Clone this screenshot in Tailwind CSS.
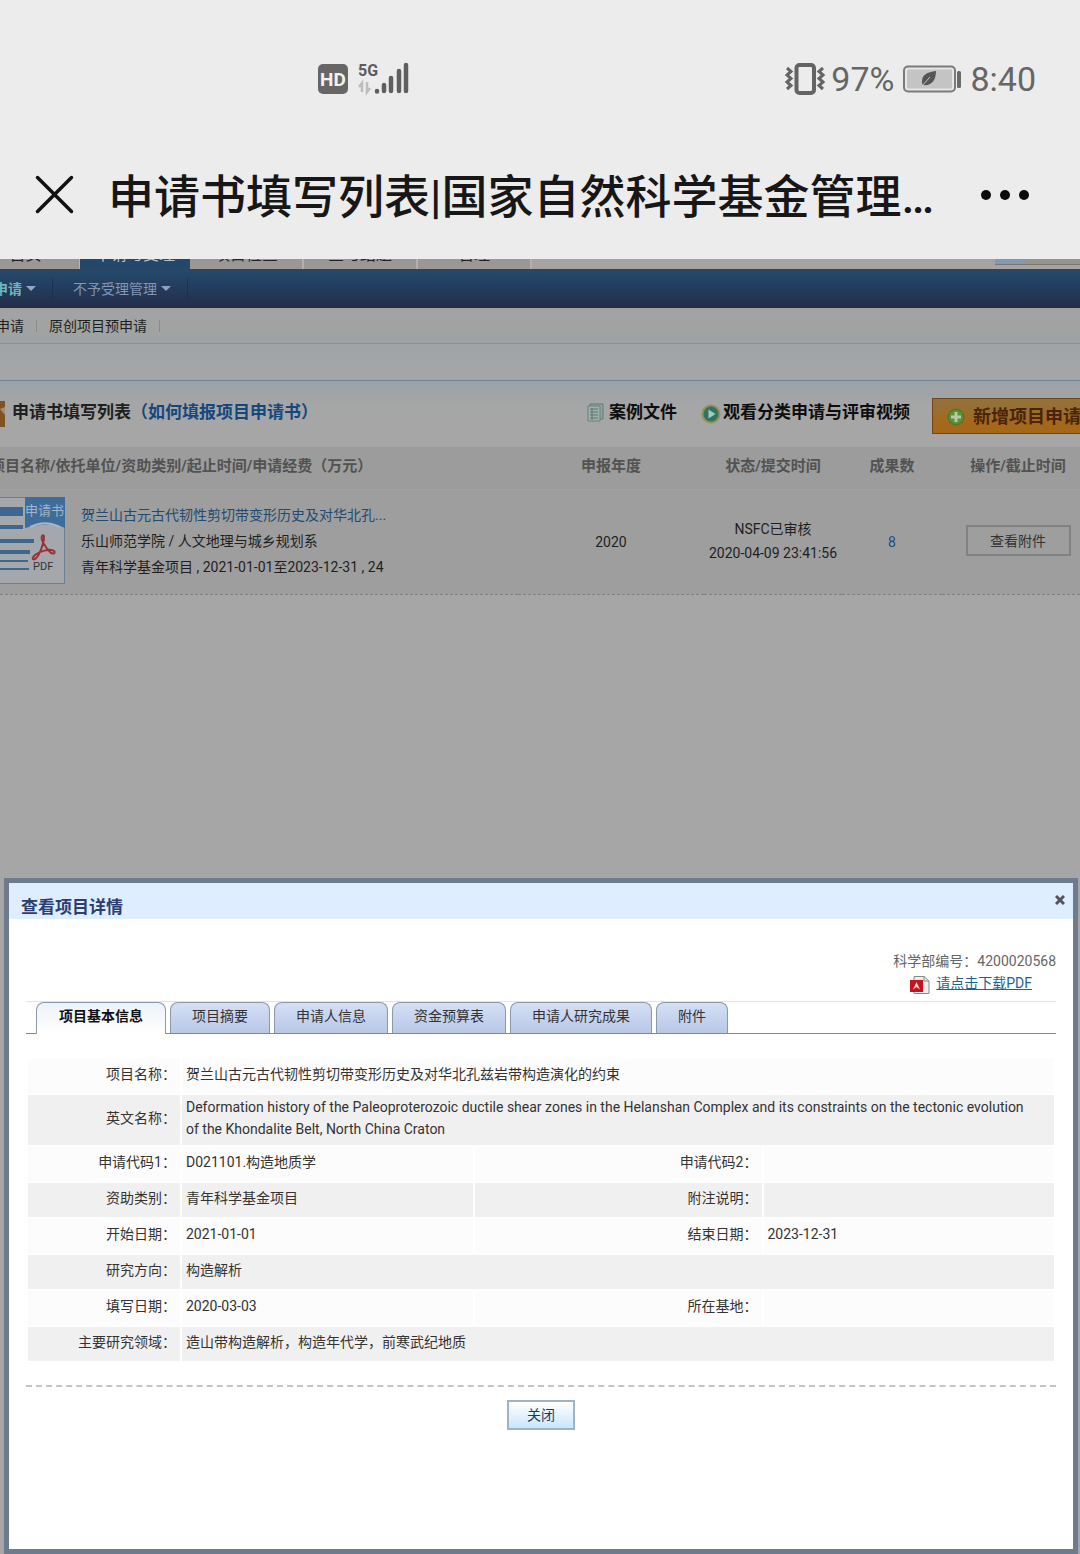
<!DOCTYPE html>
<html lang="zh-CN">
<head>
<meta charset="utf-8">
<meta name="viewport" content="width=device-width, initial-scale=1">
<title>申请书填写列表|国家自然科学基金管理</title>
<script src="https://cdn.jsdelivr.net/npm/@tailwindcss/browser@4"></script>
</head>
<body class="flex min-h-screen flex-col overflow-x-hidden bg-[#a6a6a6] font-['Roboto','Noto_Sans_CJK_SC',sans-serif] text-sm text-[#1f1f1f]">

<!-- Phone status bar and in-app browser title -->
<header class="bg-[#ececec]">
  <div class="flex h-[158px] items-center justify-between pr-11 pl-[318px] text-[#666]">
    <div class="flex items-center gap-2.5">
      <svg class="size-[30px]" viewBox="0 0 30 30" role="img" aria-label="HD"><rect width="30" height="30" rx="5" fill="#666"/><text x="15" y="22" text-anchor="middle" font-family="Roboto" font-weight="700" font-size="19" fill="#f2f2f2">HD</text></svg>
      <svg class="h-[34px] w-[52px]" viewBox="0 0 52 34" role="img" aria-label="5G">
        <text x="0" y="14" font-family="Roboto" font-weight="700" font-size="16" fill="#5c5c5c">5G</text>
        <path d="M4 30V21L1 25M9 20v10l3-4" fill="none" stroke="#bdbdbd" stroke-width="2.500"/>
        <g stroke="#5f5f5f" stroke-width="4.500" stroke-linecap="round"><path d="M19 29v0.500M26 23v6M33 16v13M41 9v20M48 3v26"/></g>
      </svg>
    </div>
    <div class="flex items-center text-[34px] leading-10">
      <svg class="mr-1.5 h-8 w-10" viewBox="0 0 40 32" fill="none" stroke="#646464" aria-hidden="true"><rect x="11.500" y="2" width="17.500" height="28" rx="3" stroke-width="4"/><path d="M2 5l4 3.500-4 3.500 4 3.500-4 3.500 4 3.500-4 3.500M38 5l-4 3.500 4 3.500-4 3.500 4 3.500-4 3.500 4 3.500" stroke-width="3"/></svg>
      <span>97%</span>
      <svg class="mx-2 h-7 w-[60px]" viewBox="0 0 60 28" aria-hidden="true"><rect x="2" y="1.500" width="51" height="25" rx="4" fill="#e6e6e6" stroke="#7a7a7a" stroke-width="2"/><rect x="5" y="4.500" width="45" height="19" rx="1" fill="#c4c4c4"/><path d="M34 6c-9 1-14 4-14 10 0 2 0 3 1 4 8 1 13-4 13-14z" fill="#555"/><path d="M19 22l9-10" stroke="#c4c4c4"/><rect x="55" y="6" width="4" height="17" rx="1.500" fill="#6a6a6a"/></svg>
      <span>8:40</span>
    </div>
  </div>
  <div class="flex h-[101px] items-center pr-[50px] pb-7 pl-[35px]">
    <button type="button" aria-label="关闭页面"><svg class="size-[39px]" viewBox="0 0 39 39" stroke="#111" stroke-width="3.500" stroke-linecap="round"><path d="M2.500 2.500l34 34M36.500 2.500l-34 34"/></svg></button>
    <h1 class="ml-[34px] flex-1 pt-1 text-[46px] leading-[60px] font-medium whitespace-nowrap text-[#171717]">申请书填写列表|国家自然科学基金管理…</h1>
    <button type="button" aria-label="更多"><svg class="h-3 w-[50px]" viewBox="0 0 50 12" fill="#0b0b0b"><circle cx="6" cy="6" r="5"/><circle cx="25" cy="6" r="5"/><circle cx="44" cy="6" r="5"/></svg></button>
  </div>
</header>

<!-- Main navigation, scrolled so that only its lower edge shows -->
<nav class="flex h-2.5 items-end overflow-hidden bg-[#a6a3a1] text-center text-base leading-4 text-[#222]">
  <a href="#" class="h-7 w-20 border-r border-[#b5b5b5] bg-[#9b9794] pt-1.5 pr-7">首页</a>
  <a href="#" class="h-7 w-[110px] bg-[#23486b] pt-1.5 text-[#b5c4d4]">申请与受理</a>
  <a href="#" class="h-7 w-[114px] border-r-2 border-[#b0b0b0] bg-[#9b9794] pt-1.5">项目检查</a>
  <a href="#" class="h-7 w-[114px] border-r-2 border-[#b0b0b0] bg-[#9b9794] pt-1.5">查与结题</a>
  <a href="#" class="h-7 w-[114px] border-r-2 border-[#b0b0b0] bg-[#9b9794] pt-1.5">管理</a>
  <span class="ml-auto h-7 w-[85px] pb-1"><span class="block h-6 border-b border-[#7d766f] bg-linear-to-r from-[#8299b3] from-35% to-[#979490] to-36%"></span></span>
</nav>
<nav class="flex h-[39px] items-center border-t-2 border-[#2f465e] bg-linear-to-b from-[#23496c] to-[#232d4a] pb-0.5 text-[#8295b3]">
  <a href="#" class="-ml-1.5 flex items-center gap-1 border-r border-[#1c3150] pr-4 font-bold text-[#6db5bf]">申请<svg class="h-[5px] w-2.5" viewBox="0 0 10 5" fill="#8fa9c2"><path d="M0 0h10L5 5z"/></svg></a>
  <a href="#" class="flex items-center gap-1 border-r border-[#1c3150] pr-4 pl-5">不予受理管理<svg class="h-[5px] w-2.5" viewBox="0 0 10 5" fill="#8fa0bd"><path d="M0 0h10L5 5z"/></svg></a>
</nav>
<nav class="flex h-9 items-center border-b border-[#87909a] bg-linear-to-b from-[#a5a3a2] to-[#9ea2a3]">
  <a href="#" class="-ml-1 border-r border-[#878a8c] pr-3 leading-3">申请</a>
  <a href="#" class="border-r border-[#878a8c] px-3 leading-3">原创项目预申请</a>
</nav>
<div class="h-9 bg-linear-to-b from-[#a0a4a7] to-[#a5a5a5]"></div>

<!-- Dimmed list of applications -->
<main class="border-t border-[#71859a]">
  <div class="flex h-[66px] items-start bg-linear-to-b from-[#9ba2a8] to-[#a6a6a6] to-40% pt-[17px] text-[17px] leading-7 font-bold whitespace-nowrap">
    <svg class="mt-0.5 h-[27px] w-1.5 shrink-0" viewBox="0 0 6 27" aria-hidden="true"><rect width="5" height="27" y="1" fill="#7d5423"/><path d="M0 9l5-2v8z" fill="#a88a83"/></svg>
    <h2 class="ml-1.5">申请书填写列表</h2>
    <a href="#" class="text-[#15477f]">（如何填报项目申请书）</a>
    <a href="#" class="ml-auto flex items-center gap-1 text-[#0e0e0e]"><svg class="h-[19px] w-[18px]" viewBox="0 0 18 19"><path d="M3 1h13v15H3z" fill="#8ea59f" stroke="#637a74"/><path d="M1 3h12v15H1z" fill="#9db1aa" stroke="#6b807a"/><path d="M3 6h8M3 9h8M3 12h8M3 15h8M5 5v12" stroke="#5d766f"/></svg>案例文件</a>
    <a href="#" class="ml-6 flex items-center gap-0.5 text-[#0e0e0e]"><svg class="mt-1 size-5" viewBox="0 0 20 20"><circle cx="10" cy="10" r="9.500" fill="#93915a"/><circle cx="10" cy="10" r="7.500" fill="#2f7460"/><path d="M7.500 5.500l7 4.500-7 4.500z" fill="#a9c9c6"/></svg>观看分类申请与评审视频</a>
    <button type="button" class="ml-[22px] flex h-9 w-[148px] items-center overflow-hidden border border-r-0 border-[#74421c] bg-linear-to-b from-[#8f733d] to-[#a5681a] to-70% pt-px pl-3.5 text-lg text-[#4a2408]"><svg class="mr-2 size-[18px] shrink-0" viewBox="0 0 18 18"><circle cx="9" cy="9" r="8.500" fill="#4f7a24"/><circle cx="9" cy="9" r="7" fill="#5f8f35"/><path d="M9 4v10M4 9h10" stroke="#b9c9a8" stroke-width="3"/></svg>新增项目申请</button>
  </div>
  <table class="w-full table-fixed border-collapse text-center whitespace-nowrap">
    <colgroup><col><col class="w-[186px]"><col class="w-[138px]"><col class="w-[100px]"><col class="w-[138px]"></colgroup>
    <thead class="bg-[#9c9c9c] text-[15px] text-[#525252]">
      <tr class="h-[42px] border-b border-[#a1a1a1]">
        <th class="overflow-hidden p-0 pb-0.5 text-left"><span class="-ml-2.5">项目名称/依托单位/资助类别/起止时间/申请经费（万元）</span></th>
        <th class="p-0 pb-0.5">申报年度</th><th class="p-0 pb-0.5">状态/提交时间</th><th class="p-0 pb-0.5">成果数</th><th class="p-0 pb-0.5 pl-3.5">操作/截止时间</th>
      </tr>
    </thead>
    <tbody class="bg-[#9e9e9e]">
      <tr class="h-[105px] border-b border-dashed border-[#808080]">
        <td class="p-0 pb-px">
          <div class="flex items-center gap-4 text-left">
            <svg class="h-[88px] w-[65px] shrink-0" viewBox="0 0 65 88" role="img" aria-label="申请书 PDF">
              <path d="M-1 .5h65.500v86H-1z" fill="#a4a8ac" stroke="#6d8093"/>
              <g fill="#3e678f"><path d="M0 10h23v9H0zM0 28h23v4H0zM0 42h34v4H0zM0 53h30v4H0zM0 63h28v2H0zM0 71h29v2H0z"/></g>
              <path d="M25 0h40v31c-12-5-24-4-40 0z" fill="#3e6d9c"/><path d="M30 30c10-5 20-5 30 0" fill="none" stroke="#a8b4c0" stroke-width="2"/>
              <text x="25" y="18" font-family="Noto Sans CJK SC" font-size="13" fill="#a3b4c6">申请书</text>
              <path d="M42 39c-2 3 4 12 8 16 3 3 6 1 4-1-3-3-14 0-19 4-3 3-3 5 0 4 4-2 9-16 9-22 0-2-1-2-2-1z" fill="none" stroke="#9a3136" stroke-width="2"/>
              <text x="33" y="73" font-family="Roboto" font-size="11" fill="#333">PDF</text>
            </svg>
            <div class="leading-[26px]">
              <a href="#" class="block text-[#234a72]">贺兰山古元古代韧性剪切带变形历史及对华北孔...</a>
              <p>乐山师范学院 / 人文地理与城乡规划系</p>
              <p>青年科学基金项目 , 2021-01-01至2023-12-31 , 24</p>
            </div>
          </div>
        </td>
        <td class="p-0">2020</td>
        <td class="p-0 pb-0.5 leading-6">NSFC已审核<br>2020-04-09 23:41:56</td>
        <td class="p-0"><a href="#" class="text-[#1d4a80]">8</a></td>
        <td class="p-0 pb-0.5 pl-3.5"><button type="button" class="h-[31px] w-[105px] border-2 border-[#808386] text-[#333]">查看附件</button></td>
      </tr>
    </tbody>
  </table>
</main>

<!-- Project details dialog -->
<section role="dialog" aria-labelledby="dialog-title" class="mt-[283px] mr-0.5 ml-1 flex flex-1 flex-col border-[5px] border-[#6d7b8c] bg-white text-[#333]">
  <div class="flex h-9 items-start justify-between bg-[#deedff] pr-2 pl-3">
    <h2 id="dialog-title" class="pt-3 text-[17px] leading-6 font-bold text-[#2c3d76]">查看项目详情</h2>
    <button type="button" aria-label="关闭" class="pt-3"><svg class="size-2.5" viewBox="0 0 10 10" stroke="#555" stroke-width="3"><path d="M1 1l8 8M9 1L1 9"/></svg></button>
  </div>
  <div class="px-[17px] pt-[31px] pb-10">
    <div class="flex flex-col items-end leading-[22px] text-[#666]">
      <p>科学部编号：4200020568</p>
      <a href="#" class="mr-6 flex items-center gap-1.5 text-[#1a6494] underline"><svg class="mt-1 h-[18px] w-5" viewBox="0 0 20 18"><path d="M4 .5h10l5 4.500v12.500H4z" fill="#eee" stroke="#888"/><path d="M14 .5V5h5" fill="none" stroke="#888"/><rect y="4" width="13" height="12" fill="#c4141c"/><path d="M3 13.500L6.500 6l3.500 7.500-3.500-2.500z" fill="#fbd9d5"/></svg>请点击下载PDF</a>
    </div>
    <div role="tablist" class="mt-[7px] flex h-[33px] gap-1 border-t border-b border-t-[#e2e4e8] border-b-[#7c889c] px-2.5 whitespace-nowrap">
      <button role="tab" aria-selected="true" type="button" class="-mb-px rounded-t-lg border border-b-0 border-[#8c98ac] bg-linear-to-b from-[#edf2fa] to-white px-[22px] pb-1 font-bold text-[#111]">项目基本信息</button>
      <button role="tab" type="button" class="rounded-t-lg border border-b-0 border-[#8c98ac] bg-linear-to-b from-[#d5e0f4] to-[#b9c7e8] px-[21px] pb-[3px]">项目摘要</button>
      <button role="tab" type="button" class="rounded-t-lg border border-b-0 border-[#8c98ac] bg-linear-to-b from-[#d5e0f4] to-[#b9c7e8] px-[21px] pb-[3px]">申请人信息</button>
      <button role="tab" type="button" class="rounded-t-lg border border-b-0 border-[#8c98ac] bg-linear-to-b from-[#d5e0f4] to-[#b9c7e8] px-[21px] pb-[3px]">资金预算表</button>
      <button role="tab" type="button" class="rounded-t-lg border border-b-0 border-[#8c98ac] bg-linear-to-b from-[#d5e0f4] to-[#b9c7e8] px-[21px] pb-[3px]">申请人研究成果</button>
      <button role="tab" type="button" class="rounded-t-lg border border-b-0 border-[#8c98ac] bg-linear-to-b from-[#d5e0f4] to-[#b9c7e8] px-[21px] pb-[3px]">附件</button>
    </div>
    <table class="mt-[23px] w-full table-fixed border-separate border-spacing-0.5 leading-[22px] [&_td]:px-1 [&_td]:pt-0 [&_td]:pb-[3px] [&_th]:pt-0 [&_th]:pr-1 [&_th]:pb-[3px] [&_th]:text-right [&_th]:font-normal [&_tr]:h-[34px] [&_tr:nth-child(even)>*]:bg-[#f0f0f0] [&_tr:nth-child(odd)>*]:bg-[#fcfcfc]">
      <colgroup><col class="w-[152px]"><col><col class="w-[287px]"><col></colgroup>
      <tbody>
        <tr><th scope="row">项目名称：</th><td colspan="3">贺兰山古元古代韧性剪切带变形历史及对华北孔兹岩带构造演化的约束</td></tr>
        <tr class="h-[50px]!"><th scope="row">英文名称：</th><td colspan="3">Deformation history of the Paleoproterozoic ductile shear zones in the Helanshan Complex and its constraints on the tectonic evolution<br>of the Khondalite Belt, North China Craton</td></tr>
        <tr><th scope="row">申请代码1：</th><td>D021101.构造地质学</td><th scope="row">申请代码2：</th><td></td></tr>
        <tr><th scope="row">资助类别：</th><td>青年科学基金项目</td><th scope="row">附注说明：</th><td></td></tr>
        <tr><th scope="row">开始日期：</th><td>2021-01-01</td><th scope="row">结束日期：</th><td>2023-12-31</td></tr>
        <tr><th scope="row">研究方向：</th><td colspan="3">构造解析</td></tr>
        <tr><th scope="row">填写日期：</th><td>2020-03-03</td><th scope="row">所在基地：</th><td></td></tr>
        <tr><th scope="row">主要研究领域：</th><td colspan="3">造山带构造解析，构造年代学，前寒武纪地质</td></tr>
      </tbody>
    </table>
    <div class="mt-[22px] flex justify-center border-t-2 border-dashed border-[#c4c4c4] pt-[13px]">
      <button type="button" class="h-[30px] w-[68px] border-2 border-[#9db3c6] bg-linear-to-b from-white to-[#cbe5fb] text-[#1a3c58]">关闭</button>
    </div>
  </div>
</section>
</body>
</html>
